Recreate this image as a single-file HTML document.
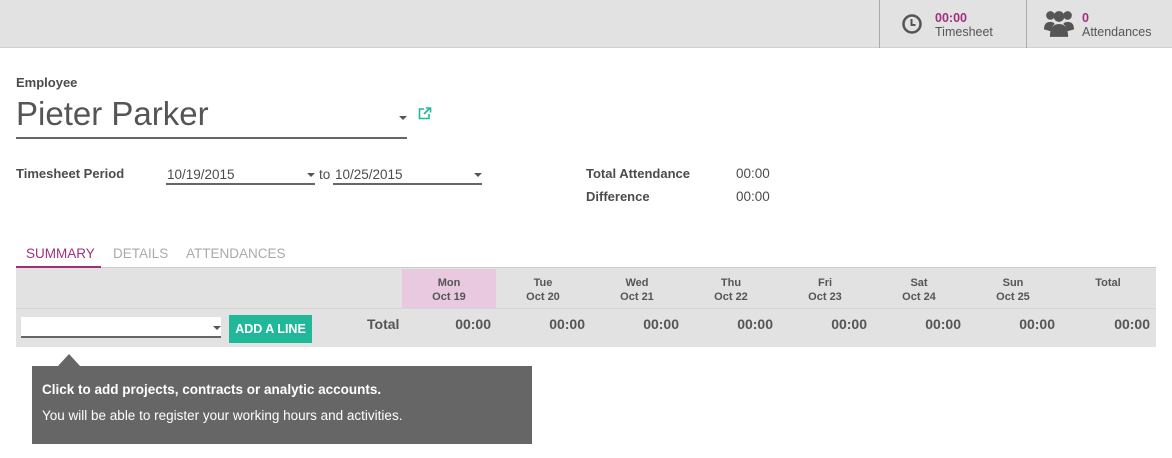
<!DOCTYPE html>
<html><head><style>
*{margin:0;padding:0;box-sizing:border-box}
body{width:1172px;height:458px;background:#fff;font-family:"Liberation Sans",sans-serif;color:#4c4c4c;position:relative;overflow:hidden}
.a{position:absolute;white-space:nowrap}
.b{font-weight:bold}
.line{position:absolute;height:2px;background:#666}
.caret{position:absolute;width:0;height:0;border-left:4px solid transparent;border-right:4px solid transparent;border-top:4px solid #555}
.hd{position:absolute;top:276px;width:94px;text-align:center;font-size:11px;font-weight:bold;line-height:14px;color:#555}
.v{position:absolute;top:316px;width:94px;text-align:right;padding-right:5px;font-size:14px;font-weight:bold;color:#555}
</style></head><body>
<div class="a" style="left:0;top:0;width:1172px;height:48px;background:#e2e2e2;border-bottom:1px solid #d0d0d0"></div>
<div class="a" style="left:879px;top:0;width:1px;height:48px;background:#aaa"></div>
<div class="a" style="left:1026px;top:0;width:1px;height:48px;background:#aaa"></div>
<svg class="a" style="left:901px;top:13px" width="22" height="22" viewBox="0 0 22 22"><circle cx="11" cy="11" r="8.5" fill="none" stroke="#555" stroke-width="2.5"/><path d="M10.5 6v6h4" fill="none" stroke="#555" stroke-width="2"/></svg>
<div class="a b" style="left:935px;top:11px;font-size:12.5px;color:#a0307d">00:00</div>
<div class="a" style="left:935px;top:25px;font-size:12.5px;color:#555">Timesheet</div>
<svg class="a" style="left:1044px;top:10px" width="30" height="28" viewBox="0 0 28 26"><g fill="#555"><circle cx="6" cy="5" r="4"/><circle cx="22" cy="5" r="4"/><circle cx="14" cy="6" r="5"/><path d="M0 18q0-7 6-7 3 0 4 2-3 2-3 7z"/><path d="M28 18q0-7-6-7-3 0-4 2 3 2 3 7z"/><path d="M5.5 25q0-12 8.5-12t8.5 12z"/></g></svg>
<div class="a b" style="left:1082px;top:11px;font-size:12.5px;color:#a0307d">0</div>
<div class="a" style="left:1082px;top:25px;font-size:12.5px;color:#555">Attendances</div>

<div class="a b" style="left:16px;top:75px;font-size:13px">Employee</div>
<div class="a" style="left:16px;top:95px;font-size:33px;color:#555">Pieter Parker</div>
<div class="line" style="left:16px;top:137px;width:391px"></div>
<div class="caret" style="left:399px;top:116px"></div>
<svg class="a" style="left:418px;top:107px" width="14" height="13" viewBox="0 0 14 13"><path d="M6 2H1.5v9.5H11V7" fill="none" stroke="#21b799" stroke-width="1.6"/><path d="M6 7l6-6M8 1h4.5v4.5" fill="none" stroke="#21b799" stroke-width="1.6"/></svg>

<div class="a b" style="left:16px;top:166px;font-size:13px">Timesheet Period</div>
<div class="a" style="left:167px;top:167px;font-size:13.5px">10/19/2015</div>
<div class="line" style="left:166px;top:183px;width:149px"></div>
<div class="caret" style="left:307px;top:173px"></div>
<div class="a" style="left:319px;top:167px;font-size:13.5px">to</div>
<div class="a" style="left:335px;top:167px;font-size:13.5px">10/25/2015</div>
<div class="line" style="left:333px;top:183px;width:149px"></div>
<div class="caret" style="left:474px;top:173px"></div>

<div class="a b" style="left:586px;top:166px;font-size:13px">Total Attendance</div>
<div class="a" style="left:736px;top:166px;font-size:13.5px">00:00</div>
<div class="a b" style="left:586px;top:189px;font-size:13px">Difference</div>
<div class="a" style="left:736px;top:189px;font-size:13.5px">00:00</div>

<div class="a" style="left:16px;top:267px;width:1140px;height:1px;background:#ccc"></div>
<div class="a" style="left:26px;top:246px;font-size:13.5px;color:#a0307d">SUMMARY</div>
<div class="a" style="left:16px;top:266px;width:85px;height:2px;background:#a0307d"></div>
<div class="a" style="left:113px;top:246px;font-size:13.5px;color:#aaa">DETAILS</div>
<div class="a" style="left:186px;top:246px;font-size:13.5px;color:#aaa">ATTENDANCES</div>

<div class="a" style="left:16px;top:268px;width:1140px;height:79px;background:#e2e2e2"></div>
<div class="a" style="left:16px;top:308px;width:1140px;height:1px;background:#d6d6d6"></div>
<div class="a" style="left:402px;top:269px;width:94px;height:39px;background:#e8c9e0"></div>
<div class="hd" style="left:402px">Mon<br>Oct 19</div>
<div class="hd" style="left:496px">Tue<br>Oct 20</div>
<div class="hd" style="left:590px">Wed<br>Oct 21</div>
<div class="hd" style="left:684px">Thu<br>Oct 22</div>
<div class="hd" style="left:778px">Fri<br>Oct 23</div>
<div class="hd" style="left:872px">Sat<br>Oct 24</div>
<div class="hd" style="left:966px">Sun<br>Oct 25</div>
<div class="hd" style="left:1061px">Total</div>

<div class="a" style="left:21px;top:317px;width:200px;height:20px;background:#fff"></div>
<div class="line" style="left:21px;top:336px;width:200px"></div>
<div class="caret" style="left:213px;top:326px"></div>
<div class="a b" style="left:229px;top:315px;width:83px;height:28px;background:#21b799;color:#fff;font-size:12.5px;text-align:center;line-height:28px">ADD A LINE</div>
<div class="a b" style="left:367px;top:316px;font-size:14px;color:#555">Total</div>
<div class="v" style="left:402px">00:00</div>
<div class="v" style="left:496px">00:00</div>
<div class="v" style="left:590px">00:00</div>
<div class="v" style="left:684px">00:00</div>
<div class="v" style="left:778px">00:00</div>
<div class="v" style="left:872px">00:00</div>
<div class="v" style="left:966px">00:00</div>
<div class="v" style="left:1061px">00:00</div>

<div class="a" style="left:58px;top:354px;width:0;height:0;border-left:11px solid transparent;border-right:11px solid transparent;border-bottom:12px solid #666"></div>
<div class="a" style="left:32px;top:366px;width:500px;height:78px;background:#666"></div>
<div class="a b" style="left:42px;top:382px;font-size:13.5px;color:#fff">Click to add projects, contracts or analytic accounts.</div>
<div class="a" style="left:42px;top:408px;font-size:13.5px;color:#fff">You will be able to register your working hours and activities.</div>
</body></html>
